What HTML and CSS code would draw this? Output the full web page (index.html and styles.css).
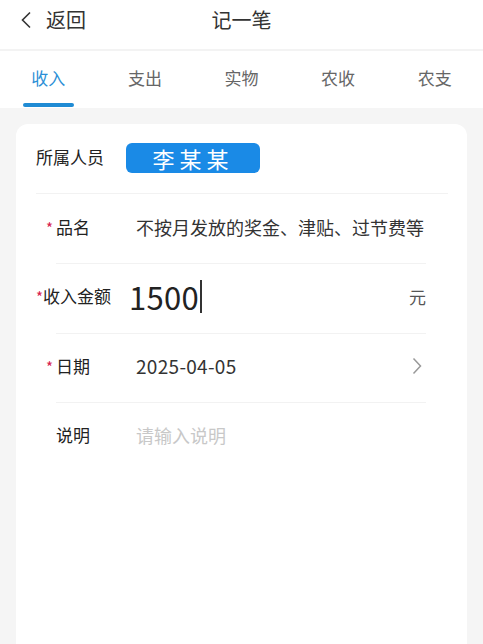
FILE: index.html
```html
<!DOCTYPE html>
<html lang="zh-CN">
<head>
    <meta charset="UTF-8">
    <meta name="viewport" content="width=device-width, initial-scale=1.0">
    <title>记一笔</title>
    <link rel="stylesheet" href="styles.css">
</head>
<body>
    <div class="header">
        <div class="back">
            <svg class="back-icon" width="12" height="18" viewBox="0 0 12 18">
                <path d="M10 1.5 L2.5 9 L10 16.5" fill="none" stroke="#333" stroke-width="1.6"/>
            </svg>
            <span>返回</span>
        </div>
        <div class="title">记一笔</div>
        <div class="spacer"></div>
    </div>
    <div class="tabs">
        <div class="tab active">收入</div>
        <div class="tab">支出</div>
        <div class="tab">实物</div>
        <div class="tab">农收</div>
        <div class="tab">农支</div>
    </div>
    <div class="main">
        <div class="card">
            <div class="member">
                <span class="member-label">所属人员</span>
                <span class="member-tag">李某某</span>
            </div>
            <div class="form">
                <div class="row">
                    <div class="label"><i>*</i>品名</div>
                    <div class="value">不按月发放的奖金、津贴、过节费等</div>
                </div>
                <div class="row">
                    <div class="label"><i>*</i>收入金额</div>
                    <div class="value amount">1500<b class="caret"></b></div>
                    <div class="unit">元</div>
                </div>
                <div class="row">
                    <div class="label"><i>*</i>日期</div>
                    <div class="value date">2025-04-05</div>
                    <svg class="arrow" width="10" height="18" viewBox="0 0 10 18">
                        <path d="M1.5 1.5 L8.5 9 L1.5 16.5" fill="none" stroke="#999" stroke-width="1.5"/>
                    </svg>
                </div>
                <div class="row last">
                    <div class="label"><i class="none">*</i>说明</div>
                    <div class="value placeholder">请输入说明</div>
                </div>
            </div>
        </div>
    </div>
</body>
</html>
```

FILE: styles.css
```css
*{
    margin: 0;
    padding: 0;
    box-sizing: border-box;
}
body{
    width: 483px;
    height: 644px;
    overflow: hidden;
    background-color: #f5f5f5;
    font-family: "Noto Sans CJK SC", "Noto Sans", sans-serif;
    color: #333;
}
.header{
    height: 51px;
    background-color: #fff;
    border-bottom: 2px solid #f3f3f3;
    display: flex;
    align-items: center;
    padding: 0 20px 10px;
}
.back{
    width: 100px;
    display: flex;
    align-items: center;
    font-size: 20px;
    color: #333;
}
.back-icon{
    margin-right: 14px;
}
.title{
    flex: 1;
    text-align: center;
    font-size: 20px;
    color: #333;
}
.spacer{
    width: 100px;
}
.tabs{
    height: 57px;
    background-color: #fff;
    display: flex;
}
.tab{
    flex: 1;
    display: flex;
    justify-content: center;
    padding-top: 14px;
    font-size: 17px;
    color: #666;
    position: relative;
}
.tab.active{
    color: #2b8fd6;
}
.tab.active::after{
    content: "";
    position: absolute;
    left: 23px;
    bottom: 1px;
    width: 51px;
    height: 4px;
    border-radius: 2px;
    background-color: #1f8bd4;
}
.main{
    padding: 16px 16px 0;
}
.card{
    height: 540px;
    background-color: #fff;
    border-radius: 12px;
}
.member{
    margin: 0 19px 0 20px;
    padding: 19px 0 20px;
    border-bottom: 1px solid #f2f2f2;
    display: flex;
    align-items: center;
}
.member-label{
    font-size: 17px;
    line-height: 22px;
    padding-bottom: 3px;
    color: #222;
    width: 90px;
}
.member-tag{
    width: 134px;
    height: 30px;
    line-height: 30px;
    border-radius: 6px;
    background-color: #1a8ae6;
    color: #fff;
    font-size: 22px;
    letter-spacing: 5px;
    text-align: center;
}
.form{
    margin: 0 41px 0 20px;
}
.row{
    height: 69.5px;
    padding-bottom: 5px;
    display: flex;
    align-items: center;
    position: relative;
}
.row:first-child{
    height: 70px;
}
.row::after{
    content: "";
    position: absolute;
    left: 20px;
    right: 0;
    bottom: 0;
    height: 1px;
    background-color: #f2f2f2;
}
.row.last::after{
    display: none;
}
.label{
    width: 64px;
    flex-shrink: 0;
    display: flex;
    align-items: flex-start;
    justify-content: center;
    font-size: 17px;
    line-height: 24px;
    color: #222;
    white-space: nowrap;
}
.row:nth-child(2) .label{
    justify-content: flex-start;
}
.label i{
    width: 10px;
    padding-top: 5px;
    font-style: normal;
    color: #d6204e;
    font-size: 15px;
    line-height: 15px;
}
.label i.none{
    visibility: hidden;
}
.value{
    flex: 1;
    margin-left: 36px;
    font-size: 18px;
    color: #333;
    white-space: nowrap;
}
.value.amount{
    margin-left: 29px;
    font-size: 31px;
    letter-spacing: 0.3px;
    color: #222;
    display: flex;
    align-items: center;
}
.value.date{
    font-size: 19px;
    letter-spacing: 0.3px;
}
.caret{
    display: inline-block;
    width: 1.5px;
    height: 33px;
    background-color: #333;
    margin-left: 1px;
}
.value.placeholder{
    color: #c8c8c8;
}
.unit{
    font-size: 17px;
    color: #555;
}
.arrow{
    margin-right: 4px;
}
```
